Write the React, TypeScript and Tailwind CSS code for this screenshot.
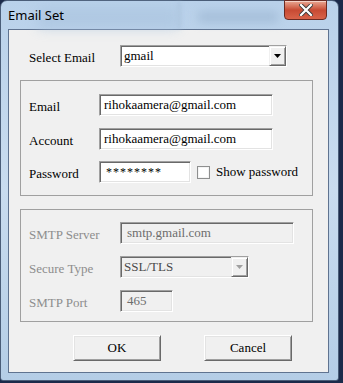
import React from 'react'

const serif = { fontFamily: '"Liberation Serif", "Times New Roman", serif' }

function Sunken({ className = '', children }: { className?: string; children?: React.ReactNode }) {
  return (
    <div
      className={`border border-t-[#a0a0a0] border-l-[#a0a0a0] border-b-white border-r-white shadow-[inset_1px_1px_0_#696969,inset_-1px_-1px_0_#e3e3e3] ${className}`}
    >
      {children}
    </div>
  )
}

function DropButton({ disabled }: { disabled?: boolean }) {
  return (
    <div className="w-[17px] h-full bg-[#f0f0f0] border border-t-[#f0f0f0] border-l-[#f0f0f0] border-b-[#696969] border-r-[#696969] shadow-[inset_1px_1px_0_#fff,inset_-1px_-1px_0_#a0a0a0] flex items-center justify-center">
      <svg width="7" height="4" viewBox="0 0 7 4">
        <path d="M0 0h7L3.5 4z" fill={disabled ? '#a0a0a0' : '#000'} />
      </svg>
    </div>
  )
}

function Field({ label, value, width, disabled }: { label: string; value: string; width: string; disabled?: boolean }) {
  return (
    <div className="flex items-center h-[22px]">
      <span className={`w-[70px] pt-[3px] text-[13px] ${disabled ? 'text-[#8d8d8d]' : 'text-black'}`}>{label}</span>
      <Sunken className={`${width} h-[22px] ${disabled ? 'bg-[#f0f0f0]' : 'bg-white'} flex items-center pl-[4px]`}>
        <span className={`text-[13px] ${disabled ? 'text-[#6d6d6d]' : 'text-black'}`}>{value}</span>
      </Sunken>
    </div>
  )
}

function Button({ label }: { label: string }) {
  return (
    <div className="w-[88px] h-[26px] bg-[#f0f0f0] border border-t-white border-l-white border-b-[#696969] border-r-[#696969] shadow-[inset_1px_1px_0_#e3e3e3,inset_-1px_-1px_0_#a0a0a0] flex items-center justify-center text-[13px] text-black">
      {label}
    </div>
  )
}

export default function App() {
  return (
    <div className="w-[343px] h-[383px] bg-[#1b2a4a] relative overflow-hidden">
      <div className="w-[339px] h-[381px] rounded-t-[7px] rounded-b-[3px] border border-[#4a5d78] bg-gradient-to-b from-[#b9d1ea] via-[#c9dcef] to-[#b4cde6] px-[7px] flex flex-col">
        <div className="h-[28px] flex items-start relative">
          <div className="absolute left-[30px] top-[6px] w-[140px] h-[22px] bg-[#a9c3de] blur-[6px] opacity-60" />
          <div className="absolute left-[170px] top-[0px] w-[2px] h-[28px] bg-[#9fb8d3] blur-[2px] opacity-70" />
          <div className="absolute left-[190px] top-[10px] w-[80px] h-[12px] bg-[#93aecb] blur-[5px] opacity-50" />
          <span
            className="relative pt-[5px] text-[13px] text-black"
            style={{ fontFamily: '"Noto Sans", "Open Sans", sans-serif' }}
          >
            Email Set
          </span>
          <div className="absolute right-[4px] -top-[1px] w-[43px] h-[20px] rounded-b-[4px] border border-[#6b2a22] bg-gradient-to-b from-[#e8a793] via-[#c74a33] to-[#d8634a] flex items-center justify-center shadow-[inset_0_1px_0_rgba(255,255,255,0.5)]">
            <svg width="14" height="12" viewBox="0 0 14 12">
              <path d="M2 1L12 11M12 1L2 11" stroke="#3a3a3a" strokeWidth="4" strokeLinecap="square" />
              <path d="M2 1L12 11M12 1L2 11" stroke="#fff" strokeWidth="2.2" strokeLinecap="square" />
            </svg>
          </div>
        </div>
        <div className="w-[321px] h-[344px] border border-[#5f7390] bg-[#f0f0f0] flex flex-col" style={serif}>
          <div className="mt-[15px] flex items-center h-[22px] pl-[20px]">
            <span className="w-[91px] pt-[3px] text-[13px] text-black">Select Email</span>
            <Sunken className="w-[167px] h-[22px] bg-white flex items-stretch">
              <span className="flex-1 pl-[3px] text-[13px] text-black leading-[20px]">gmail</span>
              <DropButton />
            </Sunken>
          </div>
          <div className="ml-[11px] mt-[13px] w-[293px] h-[116px] border border-[#a0a0a0] pl-[8px] pt-[13px] flex flex-col gap-[12px]">
            <Field label="Email" value="rihokaamera@gmail.com" width="w-[174px]" />
            <Field label="Account" value="rihokaamera@gmail.com" width="w-[174px]" />
            <div className="flex items-center h-[22px] -mt-[1px]">
              <span className="w-[70px] pt-[3px] text-[13px] text-black">Password</span>
              <Sunken className="w-[92px] h-[22px] bg-white flex items-center pl-[6px]">
                <span className="text-[12px] text-black tracking-[1px]">********</span>
              </Sunken>
              <div className="ml-[6px] w-[13px] h-[13px] border border-[#8e8f8f] bg-white shadow-[inset_0_0_0_1px_#f4f4f4]" />
              <span className="ml-[6px] text-[13px] text-black">Show password</span>
            </div>
          </div>
          <div className="ml-[11px] mt-[13px] w-[293px] h-[113px] border border-[#a0a0a0] pl-[8px] pt-[12px] flex flex-col gap-[12px]">
            <div className="flex items-center h-[22px]">
              <span className="w-[91px] pt-[3px] text-[13px] text-[#8d8d8d]">SMTP Server</span>
              <Sunken className="w-[174px] h-[22px] bg-[#f0f0f0] flex items-center pl-[6px]">
                <span className="text-[13px] text-[#6d6d6d]">smtp.gmail.com</span>
              </Sunken>
            </div>
            <div className="flex items-center h-[22px]">
              <span className="w-[91px] pt-[3px] text-[13px] text-[#8d8d8d]">Secure Type</span>
              <Sunken className="w-[129px] h-[22px] bg-[#f0f0f0] flex items-stretch">
                <span className="flex-1 pl-[3px] text-[13px] text-[#4a4a4a] leading-[20px]">SSL/TLS</span>
                <DropButton disabled />
              </Sunken>
            </div>
            <div className="flex items-center h-[22px]">
              <span className="w-[91px] pt-[3px] text-[13px] text-[#8d8d8d]">SMTP Port</span>
              <Sunken className="w-[53px] h-[22px] bg-[#f0f0f0] flex items-center pl-[6px]">
                <span className="text-[13px] text-[#6d6d6d]">465</span>
              </Sunken>
            </div>
          </div>
          <div className="mt-[13px] flex pl-[64px] gap-[43px]">
            <Button label="OK" />
            <Button label="Cancel" />
          </div>
        </div>
      </div>
    </div>
  )
}
